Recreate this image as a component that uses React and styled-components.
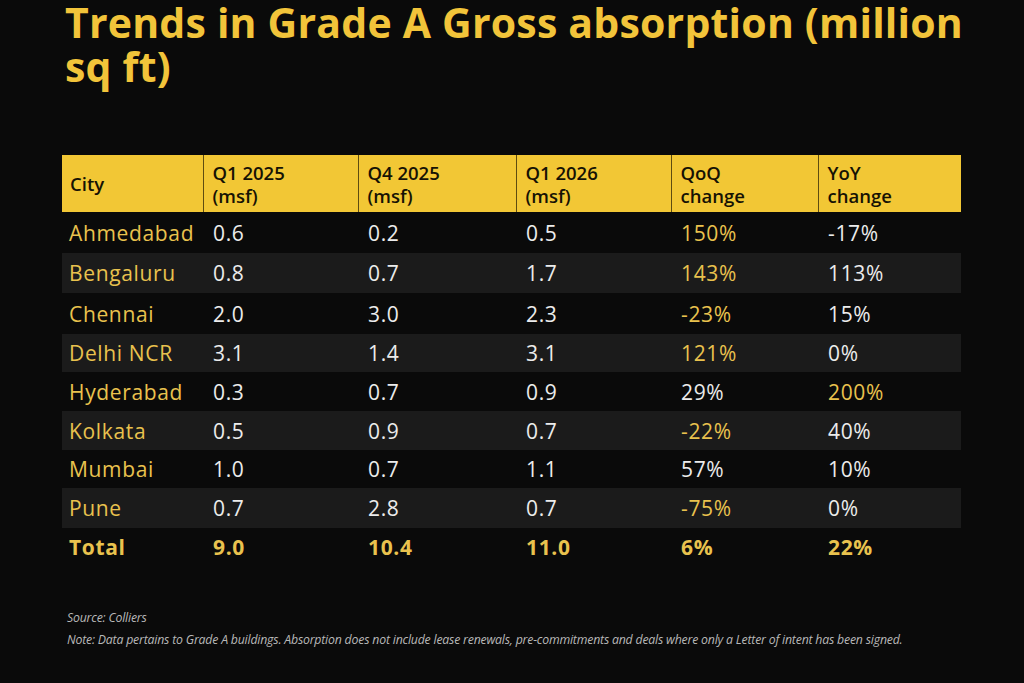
import React from "react";
import styled, { createGlobalStyle } from "styled-components";

const Global = createGlobalStyle`
  html, body { margin: 0; padding: 0; background: #0a0a0a; }
  body { font-family: "Open Sans", "Liberation Sans", sans-serif; }
  #root { width: 1024px; height: 683px; overflow: hidden; }
`;

const Page = styled.div`
  width: 1024px;
  height: 683px;
  box-sizing: border-box;
  padding: 0 62px;
  background: #0a0a0a;
  display: flex;
  flex-direction: column;
`;

const Title = styled.h1`
  margin: 0 0 0 3px;
  width: 935px;
  font-size: 41px;
  line-height: 44px;
  font-weight: 700;
  color: #f2c43a;
  letter-spacing: 0.2px;
`;

const Table = styled.table`
  margin-top: 67px;
  width: 899px;
  border-collapse: collapse;
  table-layout: fixed;
`;

const HeadCell = styled.th`
  background: #f2c735;
  color: #161204;
  font-size: 18.5px;
  font-weight: 600;
  line-height: 23px;
  text-align: left;
  vertical-align: middle;
  height: 57px;
  box-sizing: border-box;
  padding: 0 8px 0 9px;
  border-left: 1.5px solid #5e4c10;
  &:first-child { border-left: none; padding-left: 8px; }
`;

const Row = styled.tr`
  background: ${(p) => (p.$striped ? "#1b1b1b" : "transparent")};
`;

const Cell = styled.td`
  height: ${(p) => p.$h}px;
  padding: 0 8px 0 10px;
  font-size: 21px;
  letter-spacing: 0.65px;
  font-weight: ${(p) => (p.$bold ? 700 : 400)};
  color: ${(p) => (p.$gold ? "#e9c24e" : "#ececec")};
  white-space: nowrap;
  vertical-align: middle;
  &:first-child { padding-left: 7px; }
`;

const Footer = styled.div`
  margin-top: 43px;
  padding-left: 5px;
  display: flex;
  flex-direction: column;
  gap: 5px;
  font-style: italic;
  font-size: 12.3px;
  line-height: 17px;
  color: #b8b8b8;
  letter-spacing: -0.2px;
`;

const cols = [
  { t: "City", w: 141 },
  { t: ["Q1 2025", "(msf)"], w: 155 },
  { t: ["Q4 2025", "(msf)"], w: 158 },
  { t: ["Q1 2026", "(msf)"], w: 155 },
  { t: ["QoQ", "change"], w: 147 },
  { t: ["YoY", "change"], w: 143 },
];

const rows = [
  ["Ahmedabad", "0.6", "0.2", "0.5", "150%", "-17%", true, false, 41],
  ["Bengaluru", "0.8", "0.7", "1.7", "143%", "113%", true, false, 40],
  ["Chennai", "2.0", "3.0", "2.3", "-23%", "15%", true, false, 41],
  ["Delhi NCR", "3.1", "1.4", "3.1", "121%", "0%", true, false, 38],
  ["Hyderabad", "0.3", "0.7", "0.9", "29%", "200%", false, true, 39],
  ["Kolkata", "0.5", "0.9", "0.7", "-22%", "40%", true, false, 39],
  ["Mumbai", "1.0", "0.7", "1.1", "57%", "10%", false, false, 38],
  ["Pune", "0.7", "2.8", "0.7", "-75%", "0%", true, false, 40],
];

export default function App() {
  return (
    <>
      <Global />
      <Page>
        <Title>Trends in Grade A Gross absorption (million sq ft)</Title>
        <Table>
          <colgroup>
            {cols.map((c, i) => (
              <col key={i} style={{ width: c.w }} />
            ))}
          </colgroup>
          <thead>
            <tr>
              {cols.map((c, i) => (
                <HeadCell key={i}>
                  {Array.isArray(c.t) ? (
                    <>
                      {c.t[0]}
                      <br />
                      {c.t[1]}
                    </>
                  ) : (
                    c.t
                  )}
                </HeadCell>
              ))}
            </tr>
          </thead>
          <tbody>
            {rows.map((r, i) => (
              <Row key={r[0]} $striped={i % 2 === 1}>
                <Cell $gold $h={r[8]}>{r[0]}</Cell>
                <Cell>{r[1]}</Cell>
                <Cell>{r[2]}</Cell>
                <Cell>{r[3]}</Cell>
                <Cell $gold={r[6]}>{r[4]}</Cell>
                <Cell $gold={r[7]}>{r[5]}</Cell>
              </Row>
            ))}
            <Row>
              <Cell $gold $bold $h={38}>Total</Cell>
              <Cell $gold $bold>9.0</Cell>
              <Cell $gold $bold>10.4</Cell>
              <Cell $gold $bold>11.0</Cell>
              <Cell $gold $bold>6%</Cell>
              <Cell $gold $bold>22%</Cell>
            </Row>
          </tbody>
        </Table>
        <Footer>
          <div>Source: Colliers</div>
          <div>
            Note: Data pertains to Grade A buildings. Absorption does not include lease renewals,
            pre-commitments and deals where only a Letter of intent has been signed.
          </div>
        </Footer>
      </Page>
    </>
  );
}
